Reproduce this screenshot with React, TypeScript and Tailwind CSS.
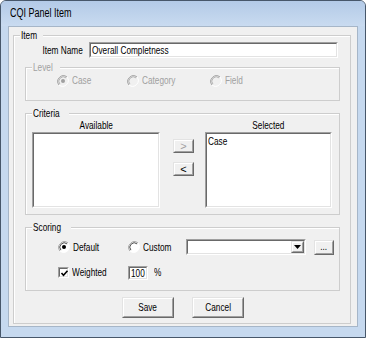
import React from "react";

type RadioProps = { checked?: boolean; disabled?: boolean };

// squeezed text, the dialog font is narrower than anything installed
const T = ({ children, o = "left", className }: { children: React.ReactNode; o?: "left" | "right" | "center"; className?: string }) => (
    <span className={`inline-block whitespace-nowrap scale-x-[0.75] ${o === "left" ? "origin-left" : o === "right" ? "origin-right" : "origin-center"} ${className ?? ""}`}>
        {children}
    </span>
);

const Radio = ({ checked, disabled }: RadioProps) => (
    <svg width="12" height="12" viewBox="0 0 12 12" className="shrink-0">
        <circle cx="6" cy="6" r="5.5" fill={disabled ? "#f0f0f0" : "#ffffff"} />
        <path d="M10 2 A5.7 5.7 0 0 0 2 10" stroke="#a0a0a0" fill="none" />
        <path d="M9.1 2.9 A4.4 4.4 0 0 0 2.9 9.1" stroke={disabled ? "#b5b5b5" : "#505050"} fill="none" />
        <path d="M2 10 A5.7 5.7 0 0 0 10 2" stroke="#ffffff" fill="none" />
        {checked && <circle cx="6" cy="6" r="2" fill={disabled ? "#a0a0a0" : "#000000"} />}
    </svg>
);

const Sunken = ({ className, children }: { className?: string; children?: React.ReactNode }) => (
    <div className={`border border-t-[#a0a0a0] border-l-[#a0a0a0] border-r-white border-b-white ${className ?? ""}`}>
        <div className="w-full h-full border border-t-[#696969] border-l-[#696969] border-r-[#e3e3e3] border-b-[#e3e3e3] bg-white">
            {children}
        </div>
    </div>
);

const Raised = ({ className, children }: { className?: string; children?: React.ReactNode }) => (
    <div className={`border border-t-[#e3e3e3] border-l-[#e3e3e3] border-r-[#696969] border-b-[#696969] ${className ?? ""}`}>
        <div className="w-full h-full border border-t-white border-l-white border-r-[#a0a0a0] border-b-[#a0a0a0] bg-[#f0f0f0] flex items-center justify-center">
            {children}
        </div>
    </div>
);

const Group = ({ label, disabled, className, children }: { label: string; disabled?: boolean; className?: string; children?: React.ReactNode }) => (
    <div className={`relative border border-[#cdcdcd] shadow-[inset_1px_1px_0_#ffffff] ${className ?? ""}`}>
        <span className={`absolute left-[6px] -top-[7px] px-[1px] leading-[13px] bg-[#f0f0f0] ${disabled ? "text-[#a0a0a0]" : "text-black"}`}>
            <T>{label}</T>
        </span>
        {children}
    </div>
);

export default function App() {
    return (
        <div className="w-[366px] h-[338px] bg-[#c6d9ef] border border-[#47576a] rounded-t-[6px] flex flex-col text-[11px] leading-[13px] text-black font-['Liberation_Sans',Arial,sans-serif]">
            {/* title bar */}
            <div className="h-[25px] shrink-0 rounded-t-[5px] bg-gradient-to-b from-[#b3cae7] to-[#c9dbf0] pl-[9px] flex items-center text-[12px]">
                <T>CQI Panel Item</T>
            </div>

            {/* client area */}
            <div className="mx-[7px] h-[301px] bg-[#f0f0f0] border border-[#a6b6c8]">
                <Group label="Item" className="ml-[4px] mt-[8px] w-[338px] h-[289px]">
                    <div className="mt-[6px] h-[16px] flex items-center">
                        <span className="w-[75px] text-right pr-[6px]"><T o="right">Item Name</T></span>
                        <Sunken className="w-[249px] h-[16px]">
                            <div className="pl-[1px] leading-[12px]"><T>Overall Completness</T></div>
                        </Sunken>
                    </div>

                    <Group label="Level" disabled className="ml-[11px] mt-[9px] w-[315px] h-[34px]">
                        <div className="mt-[6px] h-[13px] flex items-center text-[#a0a0a0]">
                            <div className="ml-[31px] w-[70px] flex items-center gap-[3px]">
                                <Radio checked disabled />
                                <T>Case</T>
                            </div>
                            <div className="w-[83px] flex items-center gap-[3px]">
                                <Radio disabled />
                                <T>Category</T>
                            </div>
                            <div className="flex items-center gap-[3px]">
                                <Radio disabled />
                                <T>Field</T>
                            </div>
                        </div>
                    </Group>

                    <Group label="Criteria" className="ml-[11px] mt-[12px] w-[315px] h-[102px]">
                        <div className="flex ml-[6px]">
                            <div className="w-[128px]">
                                <div className="mt-[5px] text-center"><T o="center">Available</T></div>
                                <Sunken className="w-[128px] h-[76px]" />
                            </div>
                            <div className="ml-[13px] w-[21px] flex flex-col">
                                <Raised className="mt-[25px] h-[14px]">
                                    <span className="text-[#a0a0a0] leading-[10px]">&gt;</span>
                                </Raised>
                                <Raised className="mt-[9px] h-[14px]">
                                    <span className="leading-[10px]">&lt;</span>
                                </Raised>
                            </div>
                            <div className="ml-[11px] w-[127px]">
                                <div className="mt-[5px] text-center"><T o="center">Selected</T></div>
                                <Sunken className="w-[127px] h-[76px]">
                                    <div className="pl-[1px] pt-[1px]"><T>Case</T></div>
                                </Sunken>
                            </div>
                        </div>
                    </Group>

                    <Group label="Scoring" className="ml-[11px] mt-[12px] w-[315px] h-[64px]">
                        <div className="mt-[11px] h-[16px] flex items-center">
                            <div className="ml-[32px] w-[70px] flex items-center gap-[3px]">
                                <Radio checked />
                                <T>Default</T>
                            </div>
                            <div className="w-[58px] flex items-center gap-[3px]">
                                <Radio />
                                <T>Custom</T>
                            </div>
                            <Sunken className="w-[120px] h-[16px]">
                                <div className="flex justify-end h-full">
                                    <Raised className="w-[13px] h-full">
                                        <svg width="7" height="4" viewBox="0 0 7 4">
                                            <path d="M0 0 H7 L3.5 4 Z" fill="#000" />
                                        </svg>
                                    </Raised>
                                </div>
                            </Sunken>
                            <Raised className="ml-[8px] w-[20px] h-[15px]">
                                <span className="leading-[8px] pb-[3px]"><T o="center">...</T></span>
                            </Raised>
                        </div>
                        <div className="mt-[11px] h-[13px] flex items-center">
                            <div className="ml-[32px] w-[70px] flex items-center gap-[3px]">
                                <Sunken className="w-[11px] h-[11px] shrink-0">
                                    <svg width="9" height="9" viewBox="0 0 9 9" className="block">
                                        <path d="M1.5 4 L3.5 6.2 L7.5 1.8" stroke="#000" strokeWidth="1.6" fill="none" />
                                    </svg>
                                </Sunken>
                                <T>Weighted</T>
                            </div>
                            <Sunken className="w-[20px] h-[14px]">
                                <div className="pl-[1px] leading-[11px]"><T>100</T></div>
                            </Sunken>
                            <span className="ml-[6px]"><T>%</T></span>
                        </div>
                    </Group>

                    <div className="mt-[6px] pl-[108px] flex gap-[18px]">
                        <Raised className="w-[52px] h-[21px]"><T o="center">Save</T></Raised>
                        <Raised className="w-[52px] h-[21px]"><T o="center">Cancel</T></Raised>
                    </div>
                </Group>
            </div>
        </div>
    );
}
